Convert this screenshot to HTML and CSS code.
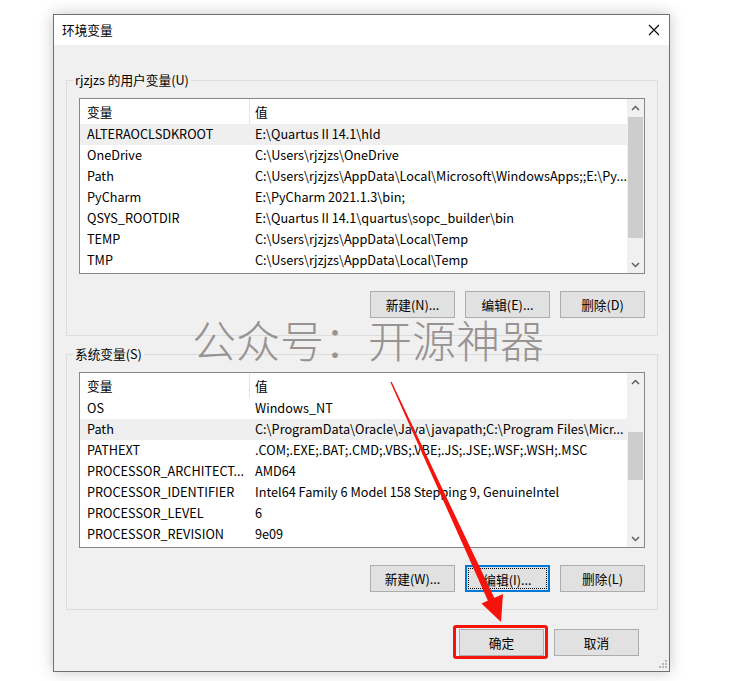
FILE: index.html
```html
<!DOCTYPE html>
<html lang="zh-CN">
<head>
<meta charset="utf-8">
<title>环境变量</title>
<link rel="stylesheet" href="styles.css">
</head>
<body>
<div class="window">
  <div class="titlebar">
    <span class="title">环境变量</span>
    <svg class="close" width="12" height="12" viewBox="0 0 12 12"><path d="M1 1 L11 11 M11 1 L1 11" stroke="#000" stroke-width="1.1" fill="none"/></svg>
  </div>
  <div class="content">
    <fieldset class="group">
      <legend>rjzjzs 的用户变量(U)</legend>
      <div class="list">
        <div class="list-main">
          <div class="hdr"><div class="c1">变量</div><div class="c2">值</div></div>
          <div class="row sel"><div class="c1">ALTERAOCLSDKROOT</div><div class="c2">E:\Quartus II 14.1\hld</div></div>
          <div class="row"><div class="c1">OneDrive</div><div class="c2">C:\Users\rjzjzs\OneDrive</div></div>
          <div class="row"><div class="c1">Path</div><div class="c2">C:\Users\rjzjzs\AppData\Local\Microsoft\WindowsApps;;E:\Py...</div></div>
          <div class="row"><div class="c1">PyCharm</div><div class="c2">E:\PyCharm 2021.1.3\bin;</div></div>
          <div class="row"><div class="c1">QSYS_ROOTDIR</div><div class="c2">E:\Quartus II 14.1\quartus\sopc_builder\bin</div></div>
          <div class="row"><div class="c1">TEMP</div><div class="c2">C:\Users\rjzjzs\AppData\Local\Temp</div></div>
          <div class="row"><div class="c1">TMP</div><div class="c2">C:\Users\rjzjzs\AppData\Local\Temp</div></div>
        </div>
        <div class="vscroll">
          <div class="arr"><svg width="9" height="6" viewBox="0 0 9 6"><path d="M1 5 L4.5 1.5 L8 5" stroke="#606060" stroke-width="1.5" fill="none"/></svg></div>
          <div class="track"><div class="thumb thumb-top"></div></div>
          <div class="arr"><svg width="9" height="6" viewBox="0 0 9 6"><path d="M1 1 L4.5 4.5 L8 1" stroke="#606060" stroke-width="1.5" fill="none"/></svg></div>
        </div>
      </div>
      <div class="btns">
        <button class="btn">新建(N)...</button>
        <button class="btn">编辑(E)...</button>
        <button class="btn">删除(D)</button>
      </div>
    </fieldset>

    <fieldset class="group sys">
      <legend>系统变量(S)</legend>
      <div class="list">
        <div class="list-main">
          <div class="hdr"><div class="c1">变量</div><div class="c2">值</div></div>
          <div class="row"><div class="c1">OS</div><div class="c2">Windows_NT</div></div>
          <div class="row sel"><div class="c1">Path</div><div class="c2">C:\ProgramData\Oracle\Java\javapath;C:\Program Files\Micr...</div></div>
          <div class="row"><div class="c1">PATHEXT</div><div class="c2">.COM;.EXE;.BAT;.CMD;.VBS;.VBE;.JS;.JSE;.WSF;.WSH;.MSC</div></div>
          <div class="row"><div class="c1">PROCESSOR_ARCHITECT...</div><div class="c2">AMD64</div></div>
          <div class="row"><div class="c1">PROCESSOR_IDENTIFIER</div><div class="c2">Intel64 Family 6 Model 158 Stepping 9, GenuineIntel</div></div>
          <div class="row"><div class="c1">PROCESSOR_LEVEL</div><div class="c2">6</div></div>
          <div class="row"><div class="c1">PROCESSOR_REVISION</div><div class="c2">9e09</div></div>
        </div>
        <div class="vscroll">
          <div class="arr"><svg width="9" height="6" viewBox="0 0 9 6"><path d="M1 5 L4.5 1.5 L8 5" stroke="#606060" stroke-width="1.5" fill="none"/></svg></div>
          <div class="track"><div class="thumb thumb-sys"></div></div>
          <div class="arr"><svg width="9" height="6" viewBox="0 0 9 6"><path d="M1 1 L4.5 4.5 L8 1" stroke="#606060" stroke-width="1.5" fill="none"/></svg></div>
        </div>
      </div>
      <div class="btns">
        <button class="btn">新建(W)...</button>
        <button class="btn focus">编辑(I)...</button>
        <button class="btn">删除(L)</button>
      </div>
    </fieldset>

    <div class="dlg-btns">
      <button class="btn ok">确定</button>
      <button class="btn">取消</button>
    </div>
  </div>
  <svg class="grip" width="9" height="9" viewBox="0 0 9 9">
    <rect x="6" y="0" width="2" height="2" fill="#bababa"/>
    <rect x="3" y="3" width="2" height="2" fill="#bababa"/>
    <rect x="6" y="3" width="2" height="2" fill="#bababa"/>
    <rect x="0" y="6" width="2" height="2" fill="#bababa"/>
    <rect x="3" y="6" width="2" height="2" fill="#bababa"/>
    <rect x="6" y="6" width="2" height="2" fill="#bababa"/>
  </svg>
</div>
<div class="watermark">公众号：开源神器</div>
<svg class="arrow" width="737" height="681" viewBox="0 0 737 681">
  <polygon points="390.4,382.2 391.6,381.8 495.1,599.6 488.7,602.4" fill="#f4140c"/>
  <polygon points="501,622 481.5,603.5 503,594" fill="#f4140c"/>
</svg>
</body>
</html>
```

FILE: styles.css
```css
* { box-sizing: border-box; }
html, body { margin: 0; padding: 0; background: #ffffff; }
body {
  width: 737px;
  height: 681px;
  overflow: hidden;
  position: relative;
  font-family: "Noto Sans CJK SC", "Noto Sans", sans-serif;
  font-size: 12.7px;
  color: #000;
}
.window {
  position: relative;
  margin: 14px 0 0 53px;
  width: 617px;
  height: 658px;
  border: 1px solid #707070;
  background: #f0f0f0;
  box-shadow: 0 0 14px rgba(0,0,0,0.22);
  overflow: hidden;
}
.titlebar {
  height: 30px;
  background: #ffffff;
  display: flex;
  align-items: center;
  justify-content: space-between;
  padding: 0 9px 0 8px;
}
.title { font-size: 12.7px; line-height: 16px; }
.close { display: block; }
.content { padding: 0 11px 0 12px; }
.group {
  margin: 27px 0 0 0;
  min-width: 0;
  border: 1px solid #dcdcdc;
  padding: 10px 12px 17px 12px;
}
.group.sys { margin-top: 10px; }
.group legend {
  padding: 0 2px;
  margin-left: -6px;
  line-height: 16px;
  font-size: 12.7px;
}
.list {
  height: 176px;
  border: 1px solid #828790;
  background: #fff;
  display: flex;
}
.list-main { flex: 1; min-width: 0; }
.hdr { height: 25px; display: flex; align-items: stretch; }
.hdr .c1 { border-right: 1px solid #e5e5e5; }
.hdr .c1, .hdr .c2 { line-height: 25px; }
.c1 { width: 170px; padding-left: 7px; white-space: nowrap; overflow: hidden; flex: none; }
.c2 { padding-left: 5px; white-space: nowrap; overflow: hidden; flex: 1; min-width: 0; }
.row { height: 21px; line-height: 20px; display: flex; }
.row.sel { background: #efefef; }
.vscroll {
  width: 17px;
  flex: none;
  background: #f0f0f0;
  display: flex;
  flex-direction: column;
}
.arr { height: 17px; display: flex; align-items: center; justify-content: center; flex: none; }
.arr svg { display: block; }
.track { flex: 1; padding: 0 1px; }
.thumb { background: #cdcdcd; width: 100%; }
.thumb-top { margin-top: 1px; height: 121px; }
.thumb-sys { margin-top: 42px; height: 48px; }
.btns {
  margin-top: 17px;
  display: flex;
  justify-content: flex-end;
  gap: 10px;
}
.btn {
  position: relative;
  width: 85px;
  height: 27px;
  background: #e1e1e1;
  border: 1px solid #adadad;
  font-family: inherit;
  font-size: 12.7px;
  color: #000;
  padding: 0;
  margin: 0;
  line-height: 25px;
}
.btn.focus { border: 2px solid #0078d7; }
.btn.focus::after {
  content: "";
  position: absolute;
  left: 1px; top: 1px; right: 1px; bottom: 1px;
  border: 1px dotted #000;
}
.dlg-btns {
  margin-top: 19px;
  padding-right: 19px;
  display: flex;
  justify-content: flex-end;
  gap: 10px;
}
.btn.ok::after {
  content: "";
  position: absolute;
  left: -7px; top: -5px; right: -5px; bottom: -4px;
  border: 3px solid #f4140c;
  border-radius: 3px;
}
.grip { position: absolute; right: 1px; bottom: 2px; display: block; }
.watermark {
  position: absolute;
  left: 192px;
  top: 320px;
  font-size: 44px;
  line-height: 38px;
  font-weight: 300;
  color: #989393;
  white-space: nowrap;
}
.arrow { position: absolute; left: 0; top: 0; pointer-events: none; }
```
